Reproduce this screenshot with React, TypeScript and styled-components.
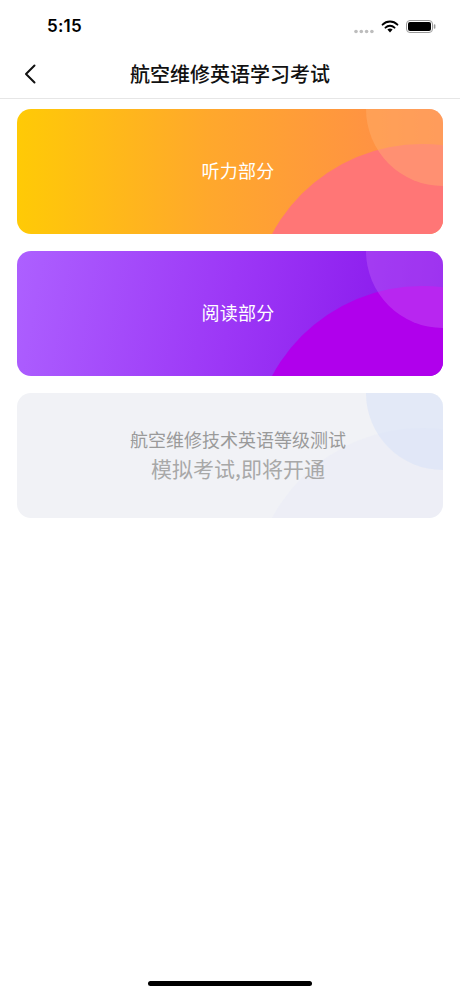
import React from "react";
import styled, { createGlobalStyle } from "styled-components";

const Global = createGlobalStyle`
  html, body { margin: 0; padding: 0; background: #ffffff; }
  body { font-family: "Noto Sans CJK SC", "Noto Sans", sans-serif; }
  * { box-sizing: border-box; }
`;

const Screen = styled.div`
  width: 460px;
  height: 996px;
  background: #ffffff;
  display: flex;
  flex-direction: column;
  position: relative;
  overflow: hidden;
`;

const StatusBar = styled.div`
  height: 50px;
  display: flex;
  align-items: center;
  justify-content: space-between;
  padding: 0 24px 0 47px;
`;

const Time = styled.span`
  font-family: Inter, "Liberation Sans", sans-serif;
  font-weight: 600;
  font-size: 17px;
  color: #000;
  letter-spacing: 0.2px;
  margin-top: 1px;
`;

const StatusIcons = styled.div`
  display: flex;
  align-items: center;
  gap: 7px;
  margin-top: 2px;
`;

const NavBar = styled.div`
  height: 49px;
  display: flex;
  align-items: center;
  justify-content: center;
  position: relative;
  border-bottom: 1px solid #e6e6e6;
`;

const BackButton = styled.div`
  position: absolute;
  left: 24px;
  top: 13px;
  width: 16px;
  height: 22px;
  display: flex;
  align-items: center;
`;

const Title = styled.h1`
  margin: 0;
  font-size: 20px;
  font-weight: 500;
  color: #111;
  margin-top: -1px;
`;

const List = styled.div`
  display: flex;
  flex-direction: column;
  gap: 17px;
  padding: 10px 17px;
`;

const Card = styled.div<{ $bg: string }>`
  position: relative;
  height: 125px;
  border-radius: 14px;
  overflow: hidden;
  background: ${(p) => p.$bg};
  display: flex;
  flex-direction: column;
  align-items: center;
  justify-content: center;
  padding: 0 0 4px 16px;
`;

const BigCircle = styled.div<{ $color: string }>`
  position: absolute;
  left: 235px;
  top: 35px;
  width: 340px;
  height: 340px;
  border-radius: 50%;
  background: ${(p) => p.$color};
`;

const SmallCircle = styled.div<{ $color: string }>`
  position: absolute;
  left: 349px;
  top: -77px;
  width: 154px;
  height: 154px;
  border-radius: 50%;
  background: ${(p) => p.$color};
`;

const CardLabel = styled.span`
  position: relative;
  font-size: 18px;
  color: #ffffff;
  font-weight: 400;
  letter-spacing: 0.3px;
`;

const SoonLine = styled.span<{ $size: number; $color: string; $lh: number }>`
  position: relative;
  font-size: ${(p) => p.$size}px;
  color: ${(p) => p.$color};
  line-height: ${(p) => p.$lh}px;
`;

const HomeIndicator = styled.div`
  position: absolute;
  left: 148px;
  bottom: 10px;
  width: 164px;
  height: 5px;
  border-radius: 3px;
  background: #000;
`;

function Wifi() {
  return (
    <svg width="18" height="13" viewBox="0 0 18 13">
      <path d="M9 12.5 L6.4 9.6 A3.8 3.8 0 0 1 11.6 9.6 Z" fill="#000" />
      <path d="M4.5 7.6 A6.5 6.5 0 0 1 13.5 7.6" stroke="#000" strokeWidth="2" fill="none" strokeLinecap="round" />
      <path d="M1.6 4.6 A10.5 10.5 0 0 1 16.4 4.6" stroke="#000" strokeWidth="2" fill="none" strokeLinecap="round" />
    </svg>
  );
}

function Battery() {
  return (
    <svg width="30" height="13" viewBox="0 0 30 13">
      <rect x="0.5" y="0.5" width="26" height="12" rx="3.5" fill="none" stroke="#999" />
      <rect x="2" y="2" width="23" height="9" rx="2" fill="#000" />
      <rect x="27.8" y="4.3" width="1.6" height="4.4" rx="0.8" fill="#999" />
    </svg>
  );
}

function Dots() {
  return (
    <svg width="20" height="5" viewBox="0 0 20 5" style={{ marginTop: 10 }}>
      {[2, 7.3, 12.6, 17.9].map((x) => (
        <circle key={x} cx={x} cy="2.5" r="1.8" fill="#bdbdbd" />
      ))}
    </svg>
  );
}

export default function App() {
  return (
    <Screen>
      <Global />
      <StatusBar>
        <Time>5:15</Time>
        <StatusIcons>
          <Dots />
          <Wifi />
          <Battery />
        </StatusIcons>
      </StatusBar>
      <NavBar>
        <BackButton>
          <svg width="12" height="20" viewBox="0 0 12 20">
            <path d="M10.5 1.5 L2 10 L10.5 18.5" stroke="#111" strokeWidth="2" fill="none" strokeLinecap="round" strokeLinejoin="round" />
          </svg>
        </BackButton>
        <Title>航空维修英语学习考试</Title>
      </NavBar>
      <List>
        <Card $bg="linear-gradient(90deg, #FFCA06 0%, #FFA82C 45%, #FF8A4C 100%)">
          <BigCircle $color="#FF7676" />
          <SmallCircle $color="rgba(255, 178, 110, 0.45)" />
          <CardLabel>听力部分</CardLabel>
        </Card>
        <Card $bg="linear-gradient(100deg, #AD60FF 0%, #9C37F6 50%, #8612EA 100%)">
          <BigCircle $color="#B000EC" />
          <SmallCircle $color="rgba(200, 110, 250, 0.35)" />
          <CardLabel>阅读部分</CardLabel>
        </Card>
        <Card $bg="#F1F2F6">
          <BigCircle $color="rgba(228, 232, 245, 0.35)" />
          <SmallCircle $color="rgba(215, 225, 248, 0.55)" />
          <SoonLine $size={18} $color="#9a9a9a" $lh={28}>航空维修技术英语等级测试</SoonLine>
          <SoonLine $size={21} $color="#a8a8a8" $lh={30}>模拟考试,即将开通</SoonLine>
        </Card>
      </List>
      <HomeIndicator />
    </Screen>
  );
}
